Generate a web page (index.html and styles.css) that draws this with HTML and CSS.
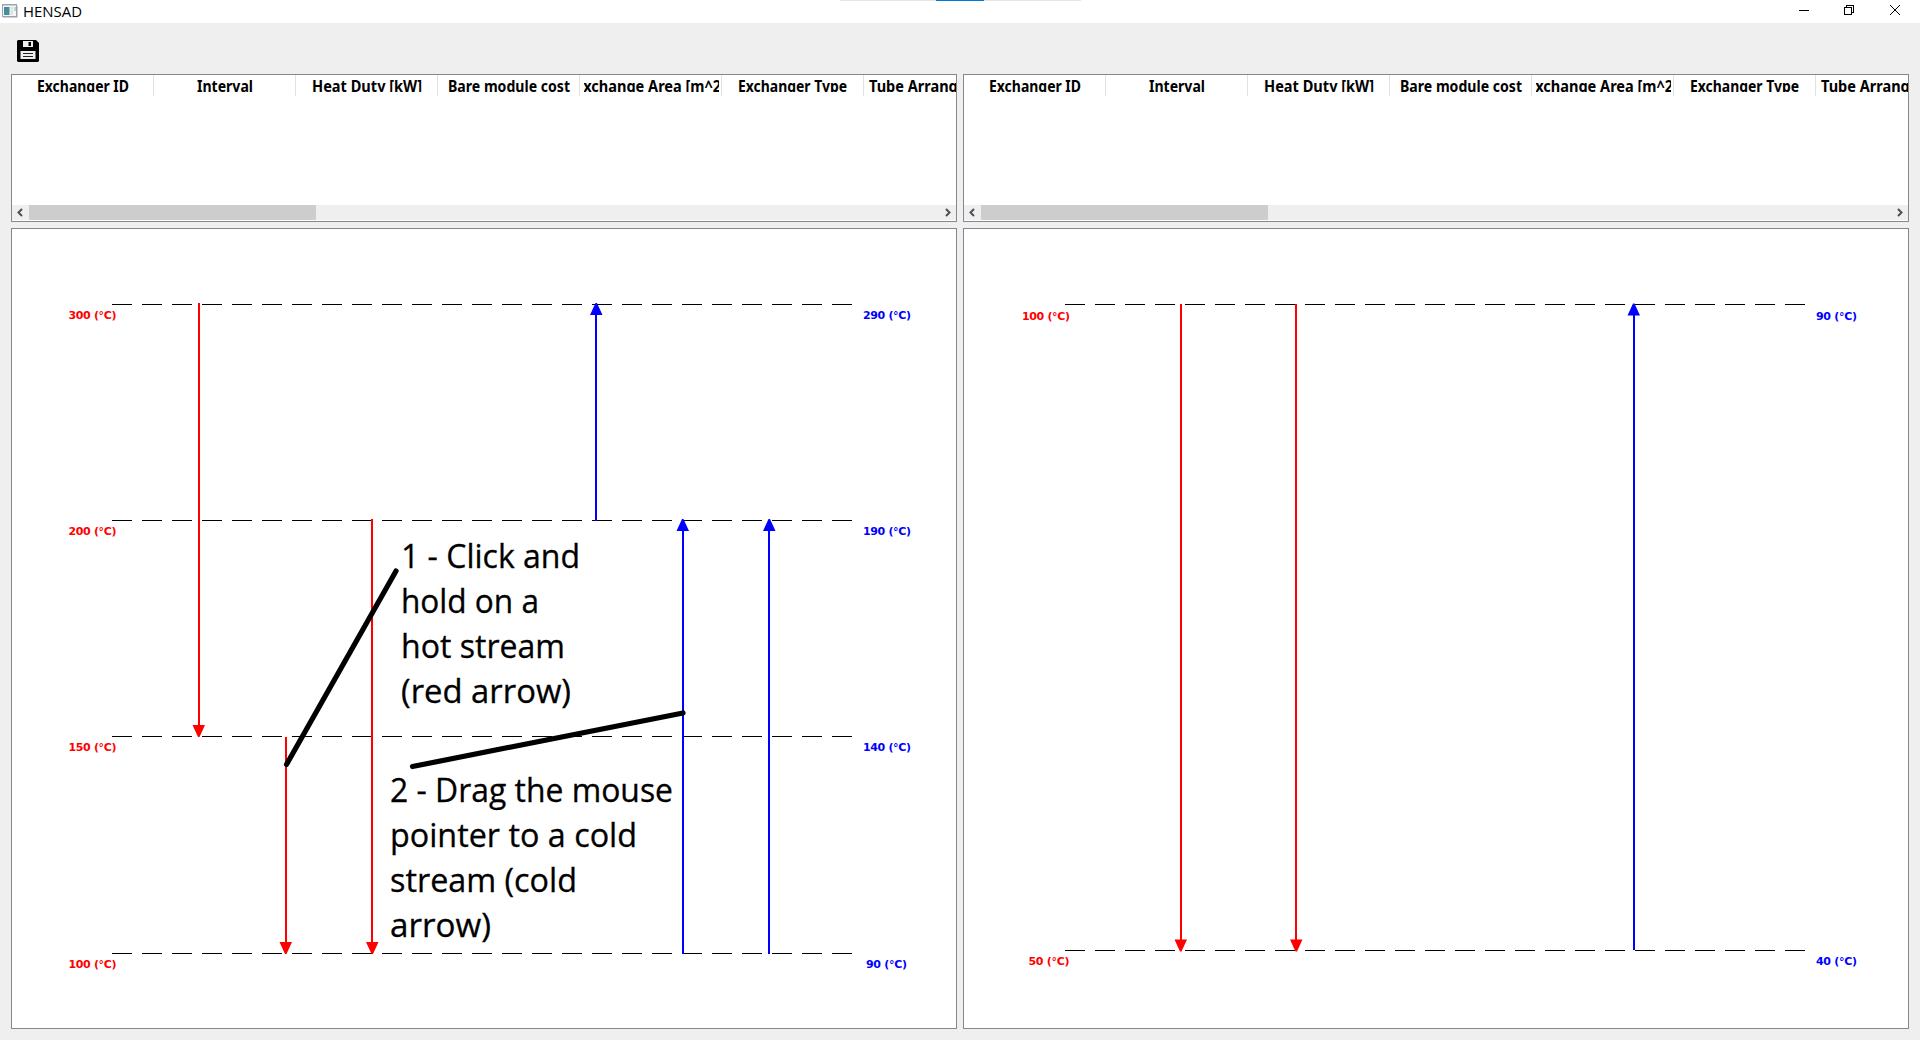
FILE: index.html
```html
<!DOCTYPE html>
<html lang="en">
<head>
<meta charset="utf-8">
<title>HENSAD</title>
<link rel="stylesheet" href="styles.css">
</head>
<body>
<header class="titlebar">
  <svg class="app-icon" width="16" height="14" viewBox="0 0 16 14">
    <rect x=".5" y=".5" width="14" height="12" fill="#f4f6f8" stroke="#98a3b0"/>
    <path d="M1 1.5h13" stroke="#c8d0d8"/>
    <rect x="2" y="3" width="5.500" height="8" fill="#478f91"/>
    <rect x="2" y="3" width="3" height="4" fill="#4f83aa"/>
    <rect x="8.500" y="3" width="2.500" height="8" fill="#dfe3e8"/>
    <rect x="12" y="3" width="2" height="4" fill="#b5d8c4"/>
    <path d="M1 13.500h14.500V2" fill="none" stroke="#d0d0d0"/>
  </svg>
  <h1 class="title"><svg width="64" height="22"><text x="-1" y="17" textLength="59" lengthAdjust="spacingAndGlyphs">HENSAD</text></svg></h1>
  <div class="grip"></div>
  <svg class="controls" width="112" height="20" viewBox="1799 0 112 20" fill="none" stroke="#000" shape-rendering="crispEdges">
    <path d="M1799 10.500h10"/>
    <path d="M1844.500 7.500h7v7h-7zM1846.500 7V5.500h7v7H1852"/>
    <path d="M1890 5l10 10M1900 5l-10 10" shape-rendering="auto"/>
  </svg>
</header>
<nav class="toolbar">
  <svg width="22" height="22" viewBox="0 0 22 22">
    <path d="M1 0h18l3 3v18l-1 1H1l-1-1V1z" fill="#000"/>
    <path d="M6 1h10v6H6z" fill="#efefef"/><path d="M11.500 2h2.500v4h-2.500z" fill="#000"/>
    <path d="M3.500 11h15v8h-15z" fill="#efefef"/><path d="M6 13.500h10M6 16.500h10" stroke="#222"/>
  </svg>
</nav>
<main class="workspace">
  <section class="panel table">
    <div class="head">
      <div class="col"><svg width="135" height="17"><text x="21" y="17" textLength="92" lengthAdjust="spacingAndGlyphs">Exchanger ID</text></svg></div>
      <div class="col"><svg width="135" height="17"><text x="39" y="17" textLength="56" lengthAdjust="spacingAndGlyphs">Interval</text></svg></div>
      <div class="col"><svg width="135" height="17"><text x="12" y="17" textLength="110" lengthAdjust="spacingAndGlyphs">Heat Duty [kW]</text></svg></div>
      <div class="col"><svg width="135" height="17"><text x="6" y="17" textLength="122" lengthAdjust="spacingAndGlyphs">Bare module cost</text></svg></div>
      <div class="col"><svg width="135" height="17"><text x="-9" y="17" textLength="151" lengthAdjust="spacingAndGlyphs">Exchange Area [m^2]</text></svg></div>
      <div class="col"><svg width="135" height="17"><text x="12" y="17" textLength="109" lengthAdjust="spacingAndGlyphs">Exchanger Type</text></svg></div>
      <div class="col"><svg width="135" height="17"><text x="1" y="17" textLength="136" lengthAdjust="spacingAndGlyphs">Tube Arrangement</text></svg></div>
    </div>
    <div class="scroll"><svg width="17" height="15"><path d="M10 4L6.500 7.500l3.500 3.500"/></svg><div class="thumb"></div><svg class="right" width="17" height="15"><path d="M7 4l3.500 3.500L7 11"/></svg></div>
  </section>
  <section class="panel table">
    <div class="head">
      <div class="col"><svg width="135" height="17"><text x="21" y="17" textLength="92" lengthAdjust="spacingAndGlyphs">Exchanger ID</text></svg></div>
      <div class="col"><svg width="135" height="17"><text x="39" y="17" textLength="56" lengthAdjust="spacingAndGlyphs">Interval</text></svg></div>
      <div class="col"><svg width="135" height="17"><text x="12" y="17" textLength="110" lengthAdjust="spacingAndGlyphs">Heat Duty [kW]</text></svg></div>
      <div class="col"><svg width="135" height="17"><text x="6" y="17" textLength="122" lengthAdjust="spacingAndGlyphs">Bare module cost</text></svg></div>
      <div class="col"><svg width="135" height="17"><text x="-9" y="17" textLength="151" lengthAdjust="spacingAndGlyphs">Exchange Area [m^2]</text></svg></div>
      <div class="col"><svg width="135" height="17"><text x="12" y="17" textLength="109" lengthAdjust="spacingAndGlyphs">Exchanger Type</text></svg></div>
      <div class="col"><svg width="135" height="17"><text x="1" y="17" textLength="136" lengthAdjust="spacingAndGlyphs">Tube Arrangement</text></svg></div>
    </div>
    <div class="scroll"><svg width="17" height="15"><path d="M10 4L6.500 7.500l3.500 3.500"/></svg><div class="thumb"></div><svg class="right" width="17" height="15"><path d="M7 4l3.500 3.500L7 11"/></svg></div>
  </section>
  <section class="panel">
    <svg class="diagram" width="944" height="799" viewBox="12 229 944 799">
      <path class="level" d="M112 304.500h740M112 520.500h740M112 736.500h740M112 953.500h740"/>
      <g class="hot">
        <path d="M199 303V730M286 737V946M372 519V946"/>
        <path class="tip" d="M192.500 725h12.500l-5.500 12h-1.500zM279.500 942H292l-5.500 12H285zM366 942h12.500l-5.500 12h-1.500z"/>
      </g>
      <g class="cold">
        <path d="M596 521V312M683 954V528M769 954V528"/>
        <path class="tip" d="M590 315h12.500l-5.500-12h-1.500zM676.500 531H689l-5.500-12H682zM763 531h12.500l-5.500-12h-1.500z"/>
      </g>
      <g class="label hot-label">
        <text x="68.500" y="319" textLength="48">300 (°C)</text>
        <text x="68.500" y="535" textLength="48">200 (°C)</text>
        <text x="68.500" y="751" textLength="48">150 (°C)</text>
        <text x="68.500" y="968" textLength="48">100 (°C)</text>
      </g>
      <g class="label cold-label">
        <text x="863" y="319" textLength="48">290 (°C)</text>
        <text x="863" y="535" textLength="48">190 (°C)</text>
        <text x="863" y="751" textLength="48">140 (°C)</text>
        <text x="866" y="968" textLength="41">90 (°C)</text>
      </g>
      <path class="pointer" d="M286.500 764.500L396 571M412.500 766.500L683 713"/>
      <g class="note">
        <text x="401" y="568" textLength="179" lengthAdjust="spacingAndGlyphs">1 - Click and</text>
        <text x="401" y="613" textLength="138" lengthAdjust="spacingAndGlyphs">hold on a</text>
        <text x="401" y="658" textLength="164" lengthAdjust="spacingAndGlyphs">hot stream</text>
        <text x="401" y="703" textLength="170" lengthAdjust="spacingAndGlyphs">(red arrow)</text>
        <text x="390" y="802" textLength="283" lengthAdjust="spacingAndGlyphs">2 - Drag the mouse</text>
        <text x="390" y="847" textLength="247" lengthAdjust="spacingAndGlyphs">pointer to a cold</text>
        <text x="390" y="892" textLength="187" lengthAdjust="spacingAndGlyphs">stream (cold</text>
        <text x="390" y="937" textLength="101" lengthAdjust="spacingAndGlyphs">arrow)</text>
      </g>
    </svg>
  </section>
  <section class="panel">
    <svg class="diagram" width="944" height="799" viewBox="964 229 944 799">
      <path class="level" d="M1065 304.500h740M1065 950.500h740"/>
      <g class="hot">
        <path d="M1181 304V943M1296 304V943"/>
        <path class="tip" d="M1174.500 939.500h12.500l-5.500 12h-1.500zM1290 939.500h12.500l-5.500 12h-1.500z"/>
      </g>
      <g class="cold">
        <path d="M1634 950V312"/>
        <path class="tip" d="M1627.500 315.500h12.500l-5.500-12h-1.500z"/>
      </g>
      <g class="label hot-label">
        <text x="1022" y="320" textLength="48">100 (°C)</text>
        <text x="1028.500" y="965" textLength="41">50 (°C)</text>
      </g>
      <g class="label cold-label">
        <text x="1816" y="320" textLength="41">90 (°C)</text>
        <text x="1816" y="965" textLength="41">40 (°C)</text>
      </g>
    </svg>
  </section>
</main>
</body>
</html>
```
FILE: styles.css
```css
* { box-sizing: border-box; }
body {
  margin: 0;
  width: 1920px;
  height: 1040px;
  overflow: hidden;
  background: #efefef;
  font-family: "Open Sans", "Noto Sans", sans-serif;
}
svg { display: block; flex: none; }
.titlebar {
  position: relative;
  display: flex;
  height: 23px;
  padding: 0 9px 0 2px;
  background: #fff;
}
.app-icon { margin-top: 4px; }
.title { margin: 0 auto 0 6px; font-size: 15px; font-weight: 400; }
.grip {
  position: absolute;
  top: 0;
  left: 840px;
  width: 241px;
  height: 1px;
  background: linear-gradient(90deg, #e5e5e5 96px, #0078d7 96px 144px, #e5e5e5 144px);
}
.toolbar { height: 51px; padding: 17px 0 0 17px; }
.workspace {
  display: grid;
  grid-template-columns: 946px 946px;
  grid-template-rows: 148px 801px;
  gap: 6px;
  padding-left: 11px;
}
.panel {
  overflow: hidden;
  background: #fff;
  border: 1px solid #828790;
}
.table {
  display: flex;
  flex-direction: column;
  justify-content: space-between;
  padding-bottom: 1px;
}
.head { display: flex; height: 21px; overflow: hidden; }
.col {
  flex: none;
  width: 142px;
  padding-left: 4px;
  border-right: 1px solid #e2e2e2;
}
.col svg { overflow: hidden; }
.col text {
  font-family: "Noto Sans", "Open Sans", sans-serif;
  font-size: 15.5px;
  font-weight: 700;
}
.scroll { display: flex; height: 15px; background: #efefef; }
.scroll path { fill: none; stroke: #505050; stroke-width: 2; }
.scroll .right { margin-left: auto; }
.thumb { width: 287px; background: #cdcdcd; }
.level { stroke: #000; stroke-dasharray: 20 10; shape-rendering: crispEdges; }
.hot { stroke: #f00; stroke-width: 2; fill: #f00; }
.cold { stroke: #00f; stroke-width: 2; fill: #00f; }
.tip { stroke: none; }
.label { font: bold 11px "DejaVu Sans", sans-serif; }
.hot-label { fill: #f00; }
.cold-label { fill: #00f; }
.pointer { fill: none; stroke: #000; stroke-width: 5.2; stroke-linecap: round; }
.note { font-size: 32px; stroke: #000; stroke-width: .3; }
```
